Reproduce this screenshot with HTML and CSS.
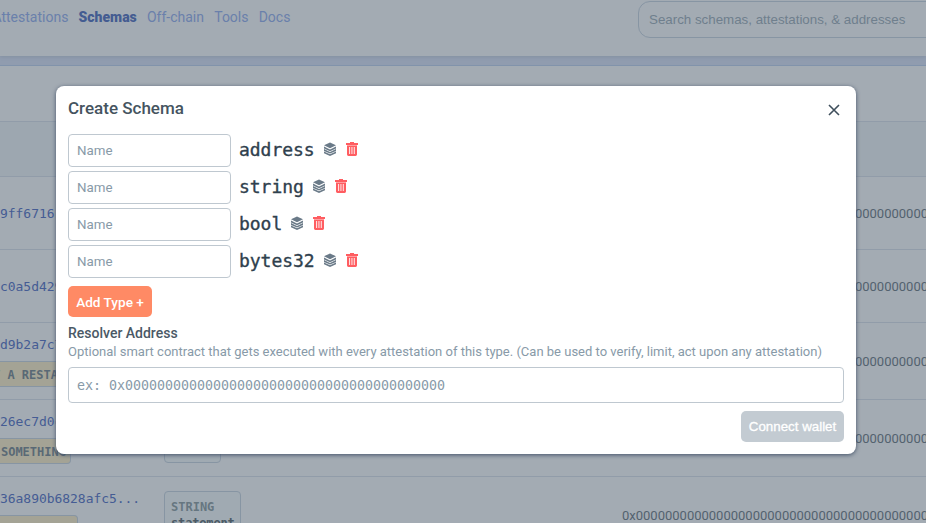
FILE: index.html
```html
<!DOCTYPE html>
<html lang="en">
<head>
<meta charset="utf-8">
<title>Create Schema</title>
<link rel="stylesheet" href="styles.css">
</head>
<body>
<svg width="0" height="0" class="defs">
  <symbol id="layers" viewBox="0 0 12 14">
    <path d="M6 0.4 12 3.3 6 6.2 0 3.3z"/>
    <path d="M0 4.6 6 7.4 12 4.6v1.8L6 9.2 0 6.4z"/>
    <path d="M0 7.1 6 9.9 12 7.1v1.8L6 11.6 0 8.9z"/>
    <path d="M0 9.5 6 12.2 12 9.5v1.7L6 14 0 11.2z"/>
  </symbol>
  <symbol id="trash" viewBox="0 0 12 14">
    <path d="M4 0h4v1h4v2H0V1h4z"/>
    <path opacity=".6" d="M1 3h10v1H1z"/>
    <path fill-rule="evenodd" d="M1 4h10v8.6q0 1.4-1.4 1.4H2.4Q1 14 1 12.6zM3.2 5v7h.9V5zm2.3 0v7h.9V5zm2.3 0v7h.9V5z"/>
  </symbol>
</svg>
<div class="page">
  <header class="topbar">
    <nav class="nav">
      <a class="first">Attestations</a><a class="active">Schemas</a><a class="off">Off-chain</a><a class="tools">Tools</a><a>Docs</a>
    </nav>
    <div class="search">Search schemas, attestations, &amp; addresses</div>
  </header>
  <main class="table">
    <div class="intro"></div>
    <div class="row head"></div>
    <div class="row"><div class="uid">9ff67161...</div><div></div><div class="resolver">0x0000000000000000000000000000000000000000</div></div>
    <div class="row"><div class="uid">c0a5d429...</div><div></div><div class="resolver">0x0000000000000000000000000000000000000000</div></div>
    <div class="row tall"><div class="uid">d9b2a7c7...<span class="tag wide">V A RESTAURANT</span></div><div></div><div class="resolver">0x0000000000000000000000000000000000000000</div></div>
    <div class="row tall"><div class="uid">26ec7d0c...<span class="tag">SOMETHING</span></div><div><div class="field small">BOOL<b>like</b></div></div><div class="resolver">0x0000000000000000000000000000000000000000</div></div>
    <div class="row tall"><div class="uid">36a890b6828afc5...<span class="tag last"></span></div><div><div class="field">STRING<b>statement</b></div></div><div class="resolver">0x0000000000000000000000000000000000000000</div></div>
  </main>
</div>
<section class="modal" role="dialog">
  <div class="title"><h1>Create Schema</h1>
    <svg class="close" viewBox="0 0 12 12"><path d="M1 1 11 11M11 1 1 11"/></svg>
  </div>
  <div class="types">
    <div class="type"><div class="name">Name</div><span class="kind">address</span><svg class="layers"><use href="#layers"/></svg><svg class="trash"><use href="#trash"/></svg></div>
    <div class="type"><div class="name">Name</div><span class="kind">string</span><svg class="layers"><use href="#layers"/></svg><svg class="trash"><use href="#trash"/></svg></div>
    <div class="type"><div class="name">Name</div><span class="kind">bool</span><svg class="layers"><use href="#layers"/></svg><svg class="trash"><use href="#trash"/></svg></div>
    <div class="type"><div class="name">Name</div><span class="kind">bytes32</span><svg class="layers"><use href="#layers"/></svg><svg class="trash"><use href="#trash"/></svg></div>
  </div>
  <button class="add">Add Type +</button>
  <div class="label">Resolver Address</div>
  <div class="hint">Optional smart contract that gets executed with every attestation of this type. (Can be used to verify, limit, act upon any attestation)</div>
  <div class="address">ex: 0x0000000000000000000000000000000000000000</div>
  <button class="connect">Connect wallet</button>
</section>
</body>
</html>
```
FILE: styles.css
```css
* { box-sizing: border-box; }
body { margin: 0; width: 926px; height: 523px; overflow: hidden; background: #909caf; font-family: Roboto, sans-serif; }
.defs { position: absolute; }
.page { height: 523px; overflow: hidden; }
.topbar { height: 56px; display: flex; justify-content: space-between; align-items: flex-start; background: #a3abb3; box-shadow: 0 1px 3px #8491a1; }
.nav { display: flex; gap: 10.2px; margin-left: -7.6px; padding-top: 9px; font-size: 14px; line-height: 16px; color: #6a80ab; white-space: nowrap; }
.nav .active { font-weight: 900; color: #445c91; }
.search { flex: none; width: 340px; height: 37px; margin: 1px -52px 0 0; padding: 0 10px; border: 1px solid #8795a3; border-radius: 12px; font: 13.33px/35px "Liberation Sans", sans-serif; color: #6f7f8d; }
.table { margin-top: 9px; border-top: 1px solid #8193ab; background: #a3abb3; }
.intro { height: 55px; }
.row { height: 73px; display: grid; grid-template-columns: 164px 458px 360px; align-items: center; border-top: 1px solid #919ca9; }
.row.head { height: 55px; background: #9da7b0; }
.row.tall { height: 77px; }
.uid { font: 13px/18px "DejaVu Sans Mono", monospace; letter-spacing: -.04px; padding-top: 1px; color: #455c94; white-space: nowrap; overflow: hidden; }
.tall .uid { align-self: start; padding-top: 13px; height: 76px; }
.tag { display: block; width: 71px; height: 26px; margin-top: 7px; padding-left: 1px; border: 1px solid #8795a3; border-left: 0; border-radius: 0 4px 4px 0; background: #a4a395; font: bold 12px/26px "DejaVu Sans Mono", monospace; letter-spacing: -.02px; color: #596975; overflow: hidden; }
.tag.wide { width: 120px; text-indent: -8px; }
.tag.last { width: 78px; margin-top: 7px; }
.field { width: 77px; height: 50px; margin-top: 2px; padding: 7px 6px; border: 1px solid #8795a3; border-radius: 4px; background: #a0aab2; font: bold 12px/16px "DejaVu Sans Mono", monospace; color: #667680; }
.field b { display: block; letter-spacing: -.15px; color: #4b5a66; }
.field.small { width: 57px; margin-top: 0; }
.resolver { font-size: 13px; color: #53626f; white-space: nowrap; }
.modal { position: absolute; left: 56px; top: 86px; width: 800px; height: 368px; padding: 12px; border-radius: 8px; background: #fff; box-shadow: 0 1px 4px #435268; display: flex; flex-direction: column; align-items: flex-start; }
.title { width: 100%; display: flex; justify-content: space-between; height: 36px; }
h1 { margin: 0; font-size: 17px; line-height: 20px; font-weight: 500; color: #455460; }
.close { width: 12px; height: 12px; margin: 6px 4px 0 0; fill: none; stroke: #3f4f5c; stroke-width: 1.6; }
.types { display: flex; flex-direction: column; gap: 4px; }
.type { display: flex; align-items: center; height: 33px; }
.name { width: 163px; height: 33px; margin-right: 8px; padding-left: 8px; border: 1px solid #bfc8d0; border-radius: 4px; font-size: 13.33px; line-height: 31px; color: #889aa8; }
.kind { margin-top: -1px; font: 18px/30px "DejaVu Sans Mono", monospace; letter-spacing: -.04px; color: #2f404d; -webkit-text-stroke: .35px #2f404d; }
.layers { width: 12px; height: 14px; margin: -3px 10px 0 9px; fill: #6a7a88; }
.trash { width: 12px; height: 14px; margin-top: -3px; fill: #ff5d61; }
button { border: 0; padding: 0; border-radius: 5px; font-family: Roboto, sans-serif; color: #fff; }
.add { width: 84px; height: 31px; margin-top: 8px; background: #ff8a65; font-size: 13.6px; font-weight: 500; }
.label { margin-top: 8px; font-size: 14px; line-height: 17px; font-weight: 500; color: #4a5966; }
.hint { margin-top: 2px; font-size: 13px; line-height: 16px; color: #889aa8; white-space: nowrap; }
.address { flex: none; width: 776px; height: 36px; margin-top: 7px; padding-left: 8px; border: 1px solid #bfc8d0; border-radius: 4px; font: 13.33px/35px "DejaVu Sans Mono", monospace; letter-spacing: -.025px; color: #889aa8; }
.connect { align-self: flex-end; width: 103px; height: 31px; margin-top: 8px; background: #c3cbd2; font: 13.33px "Liberation Sans", sans-serif; -webkit-text-stroke: .3px #fff; }
```
